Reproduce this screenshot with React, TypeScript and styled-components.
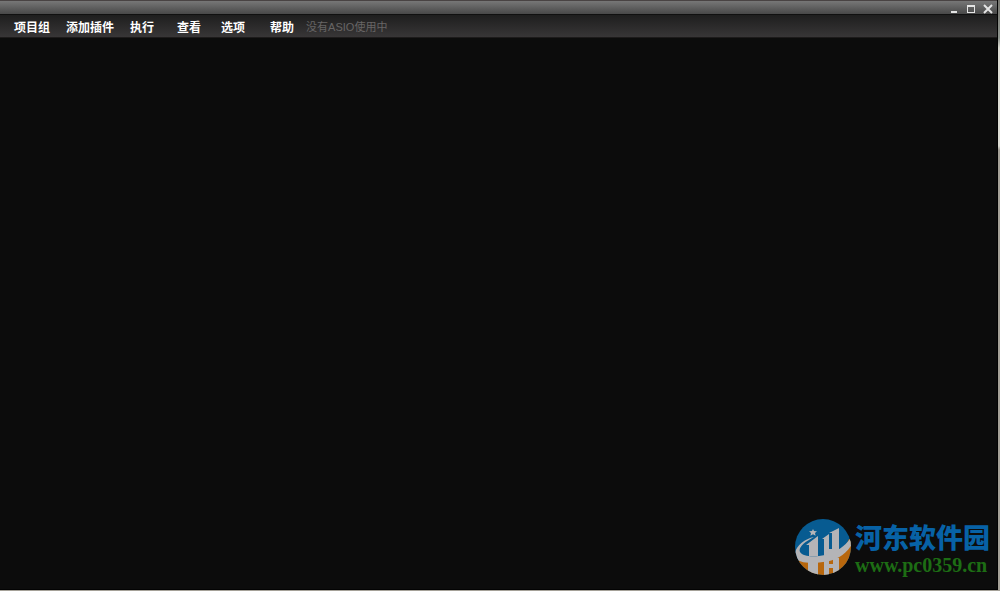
import React from 'react';
import styled, { createGlobalStyle } from 'styled-components';

const GlobalStyle = createGlobalStyle`
  * { box-sizing: border-box; }
  body { margin: 0; background: #0c0c0c; }
`;

const Desktop = styled.div`
  display: flex;
  min-height: 100vh;
  padding: 0 2px 1px 0;
  background: linear-gradient(to bottom, #77766f 0, #8f958f 38px, #dcdcd4 48px, #dcdcd4 146px, #a5a198 150px, #a5a198 100%);
`;

const Window = styled.div`
  flex: 1;
  display: flex;
  flex-direction: column;
  background: #0c0c0c;
  border-right: 1px solid #030303;
  border-bottom: 1px solid #030303;
  font-family: "Liberation Sans", "Noto Sans CJK SC", sans-serif;
`;

const TitleBar = styled.header`
  display: flex;
  justify-content: flex-end;
  align-items: center;
  gap: 5px;
  height: 15px;
  padding-right: 3px;
  border-top: 1px solid #494343;
  border-bottom: 1px solid #101010;
  background: linear-gradient(to bottom, #777 0, #484848 100%);
`;

const WindowButton = styled.button`
  display: flex;
  width: 12px;
  height: 12px;
  padding: 0;
  border: 0;
  background: none;
  color: #e4e4e4;
`;

const MenuBar = styled.nav`
  display: flex;
  align-items: center;
  height: 23px;
  padding: 1px 0 0 14px;
  border-bottom: 1px solid #1d1b1b;
  background: linear-gradient(to bottom, #1e1e1e 0, #383637 100%);
`;

const MenuButton = styled.button<{ $after: number }>`
  margin: 0 ${(p) => p.$after}px 0 0;
  padding: 0;
  border: 0;
  background: none;
  color: #fff;
  font: bold 12px/20px "Noto Sans CJK SC", sans-serif;
  white-space: nowrap;
`;

const Status = styled.span`
  color: #676565;
  font-size: 11px;
  line-height: 20px;
  white-space: nowrap;
`;

const Workspace = styled.main`
  flex: 1;
  display: flex;
  justify-content: flex-end;
  align-items: flex-end;
  padding: 0 7px 12px;
`;

const Brand = styled.div`
  display: flex;
  align-items: center;
  gap: 4px;
`;

const BrandText = styled.div`
  display: flex;
  flex-direction: column;
  padding-top: 4px;
`;

const BrandName = styled.span`
  color: #0762a6;
  font: 900 27px/32px "Noto Sans CJK SC", sans-serif;
`;

const BrandLink = styled.a`
  color: #1d6d14;
  font: bold 20px/24px "Liberation Serif", serif;
  text-decoration: none;
`;

const menus = [
  { label: '项目组', after: 16 },
  { label: '添加插件', after: 16 },
  { label: '执行', after: 23 },
  { label: '查看', after: 20 },
  { label: '选项', after: 25 },
  { label: '帮助', after: 12 },
];

const Logo = () => (
  <svg width="56" height="56" viewBox="0 0 56 56" aria-hidden="true">
    <defs>
      <clipPath id="disc"><circle cx="28" cy="28" r="28" /></clipPath>
    </defs>
    <g clipPath="url(#disc)">
      <rect width="56" height="56" fill="#075b91" />
      <path d="M0 40C16 47 44 42 54 20H57V57H0Z" fill="#b8670d" />
      <g fill="#b4b4b7">
        <path d="M11 26 23 17V37H14V26Z" />
        <path d="M27 20 34 15V30H37V14H34L44 9V34L29 37V20Z" />
        <path d="M13 42H23V56H13ZM29 41H34V45H38V39H44V56H38V49H34V56H29Z" />
        <path d="M19 18C9 23 3 29 5 33 8 38 20 38 30 36 42 33 50 27 55 20L57 25C51 36 40 42 28 43 15 45 3 44 0 38-2 30 8 20 19 18Z" />
        <path d="m18 10 1 2 3 .3-2 1.7.6 2.7-2.6-1.4-2.6 1.4.6-2.7-2-1.7 3-.3Z" />
      </g>
    </g>
  </svg>
);

export default function App() {
  return (
    <>
      <GlobalStyle />
      <Desktop>
        <Window>
          <TitleBar>
            <WindowButton aria-label="最小化">
              <svg width="12" height="12"><path d="M3 9H9V11H3Z" fill="currentColor" /></svg>
            </WindowButton>
            <WindowButton aria-label="最大化">
              <svg width="12" height="12"><path fillRule="evenodd" d="M2 3H10V11H2ZM3 5V10H9V5Z" fill="currentColor" /></svg>
            </WindowButton>
            <WindowButton aria-label="关闭">
              <svg width="12" height="12"><path d="M2 3 10 11M10 3 2 11" stroke="currentColor" strokeWidth="2" /></svg>
            </WindowButton>
          </TitleBar>
          <MenuBar>
            {menus.map((m) => (
              <MenuButton key={m.label} $after={m.after}>{m.label}</MenuButton>
            ))}
            <Status>没有ASIO使用中</Status>
          </MenuBar>
          <Workspace>
            <Brand>
              <Logo />
              <BrandText>
                <BrandName>河东软件园</BrandName>
                <BrandLink href="http://www.pc0359.cn">www.pc0359.cn</BrandLink>
              </BrandText>
            </Brand>
          </Workspace>
        </Window>
      </Desktop>
    </>
  );
}
